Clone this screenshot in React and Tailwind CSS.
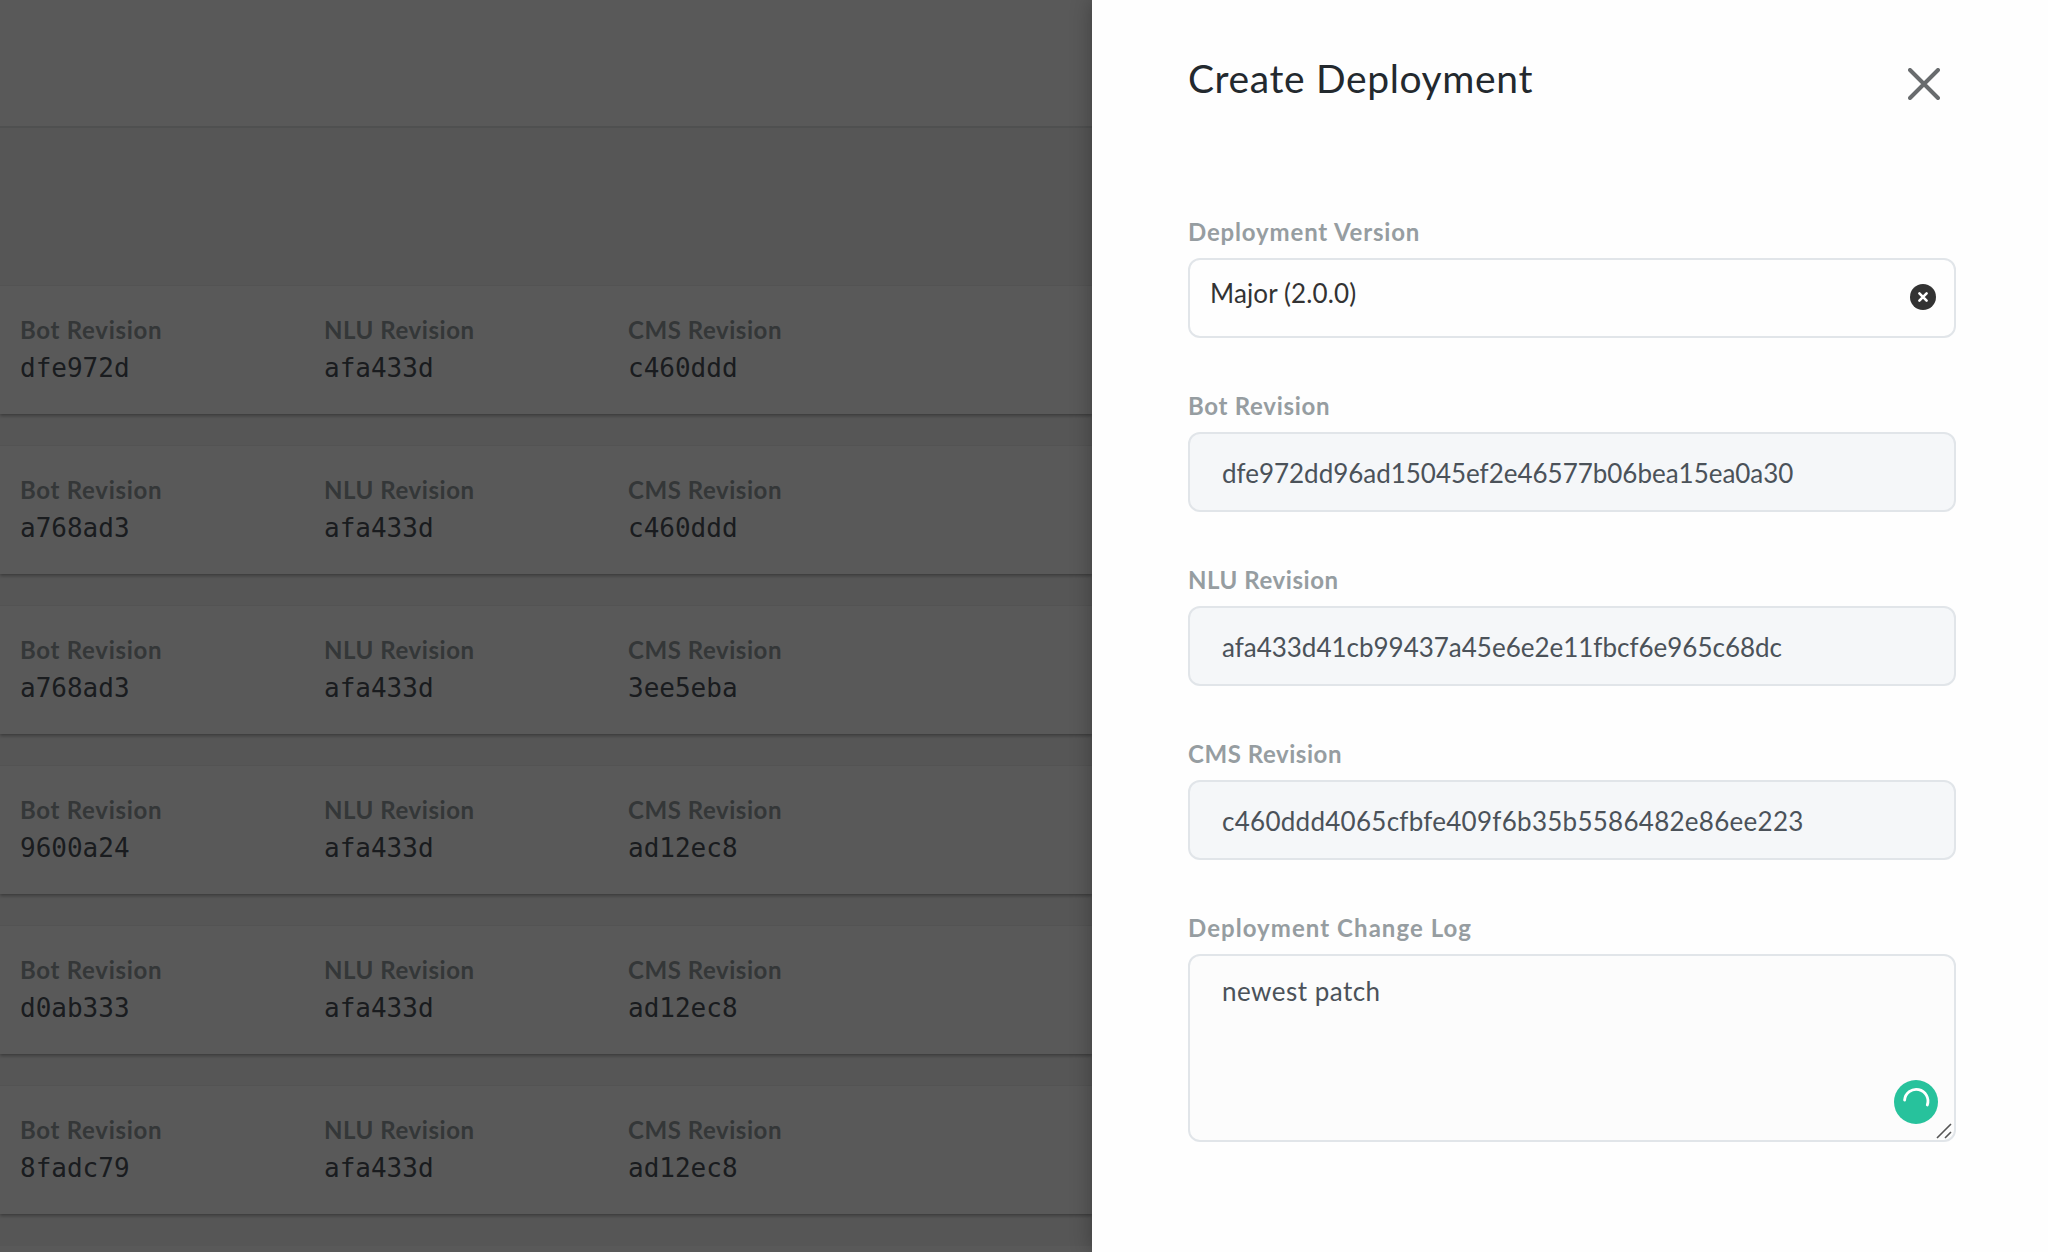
const deployments = [
  ["dfe972d", "afa433d", "c460ddd"],
  ["a768ad3", "afa433d", "c460ddd"],
  ["a768ad3", "afa433d", "3ee5eba"],
  ["9600a24", "afa433d", "ad12ec8"],
  ["d0ab333", "afa433d", "ad12ec8"],
  ["8fadc79", "afa433d", "ad12ec8"],
];

const columns = [
  { label: "Bot Revision", tracking: "tracking-[0.7px]" },
  { label: "NLU Revision", tracking: "tracking-[0.55px]" },
  { label: "CMS Revision", tracking: "tracking-[0.55px]" },
];

function Label({ children, tracking }) {
  return (
    <div className={`h-8 pt-px text-2xl leading-8 font-bold text-[#969da1] ${tracking}`}>{children}</div>
  );
}

function DeploymentCard({ values }) {
  return (
    <div className="flex h-32 shrink-0 bg-white pt-[27px] pl-5 shadow-[0_2px_3px_rgba(0,0,0,0.28),0_0_1px_rgba(0,0,0,0.12)]">
      {columns.map((column, i) => (
        <div key={column.label} className="flex w-[304px] flex-col gap-1">
          <Label tracking={column.tracking}>{column.label}</Label>
          <div className="font-['DejaVu_Sans_Mono',monospace] text-[26px] leading-[38px] text-[#4b5259]">
            {values[i]}
          </div>
        </div>
      ))}
    </div>
  );
}

function Field({ label, labelTracking, children }) {
  return (
    <div className="flex flex-col gap-[11px]">
      <Label tracking={labelTracking}>{label}</Label>
      {children}
    </div>
  );
}

function ReadOnlyInput({ value, tracking }) {
  return (
    <div
      className={`h-20 rounded-xl border-2 border-[#e1e5e9] bg-[#f5f7f9] pt-[23px] pl-8 text-[26px] leading-8 text-[#4b5259] ${tracking}`}
    >
      {value}
    </div>
  );
}

function CloseIcon() {
  return (
    <svg className="mt-3.5 mr-4 size-8" viewBox="0 0 32 32" fill="none">
      <path d="M2 2L30 30M30 2L2 30" stroke="#686b6d" strokeWidth="4" strokeLinecap="round" />
    </svg>
  );
}

function ClearIcon() {
  return (
    <svg className="mt-6 mr-[18px] size-[26px]" viewBox="0 0 26 26" fill="none">
      <circle cx="13" cy="13" r="13" fill="#333" />
      <path d="M9.4 9.4L16.6 16.6M16.6 9.4L9.4 16.6" stroke="#fff" strokeWidth="2.6" strokeLinecap="round" />
    </svg>
  );
}

function Spinner() {
  return (
    <svg className="absolute right-4 bottom-4 size-11" viewBox="0 0 44 44" fill="none">
      <circle cx="22" cy="22" r="22" fill="#27c29c" />
      <path d="M10.6 20.2A11.7 11.7 0 1 1 33.3 25" stroke="#fff" strokeWidth="2.8" strokeLinecap="round" />
    </svg>
  );
}

function ResizeHandle() {
  return (
    <svg className="absolute right-0.5 bottom-px size-4" viewBox="0 0 16 16" fill="none">
      <path d="M1 15L15 1M9 15L15 9" stroke="#555" strokeWidth="1.6" />
    </svg>
  );
}

export default function App() {
  return (
    <div className="relative flex h-[1252px] w-[2048px] overflow-hidden bg-white font-['Lato',sans-serif]">
      <main className="relative flex w-[1092px] shrink-0 flex-col overflow-hidden bg-[#f5f5f5]">
        <div className="h-32 shrink-0 border-b-2 border-[#e3e4e5] bg-white" />
        <div className="flex flex-col gap-8 pt-[158px]">
          {deployments.map((values, i) => (
            <DeploymentCard key={i} values={values} />
          ))}
          <div className="h-32 shrink-0 bg-white" />
        </div>
        <div className="absolute inset-0 bg-black/65" />
      </main>

      <aside className="relative w-[956px] bg-[#fefefe] pr-[92px] pl-24 shadow-[0_0_20px_rgba(0,0,0,0.3)]">
        <div className="flex h-[215px] items-start justify-between pt-[54px]">
          <h1 className="text-[39px] leading-[48px] tracking-[0.63px] text-[#23292e]">Create Deployment</h1>
          <CloseIcon />
        </div>

        <div className="flex flex-col gap-[51px]">
          <Field label="Deployment Version" labelTracking="tracking-[0.84px]">
            <div className="flex h-20 items-start justify-between rounded-xl border-2 border-[#e1e5e9] bg-[#fefefe]">
              <span className="pt-[17px] pl-5 text-[26px] leading-8 tracking-[0.13px] text-[#333]">Major (2.0.0)</span>
              <ClearIcon />
            </div>
          </Field>
          <Field label="Bot Revision" labelTracking="tracking-[0.7px]">
            <ReadOnlyInput value="dfe972dd96ad15045ef2e46577b06bea15ea0a30" tracking="tracking-[-0.02px]" />
          </Field>
          <Field label="NLU Revision" labelTracking="tracking-[0.55px]">
            <ReadOnlyInput value="afa433d41cb99437a45e6e2e11fbcf6e965c68dc" tracking="tracking-[-0.01px]" />
          </Field>
          <Field label="CMS Revision" labelTracking="tracking-[0.55px]">
            <ReadOnlyInput value="c460ddd4065cfbfe409f6b35b5586482e86ee223" tracking="tracking-[0.27px]" />
          </Field>
          <Field label="Deployment Change Log" labelTracking="tracking-[1.05px]">
            <div className="relative h-[188px] rounded-xl border-2 border-[#e1e5e9] bg-[#fcfcfc] pt-[19px] pl-8 text-[26px] leading-8 tracking-[0.48px] text-[#4b5259]">
              newest patch
              <Spinner />
              <ResizeHandle />
            </div>
          </Field>
        </div>
      </aside>
    </div>
  );
}
